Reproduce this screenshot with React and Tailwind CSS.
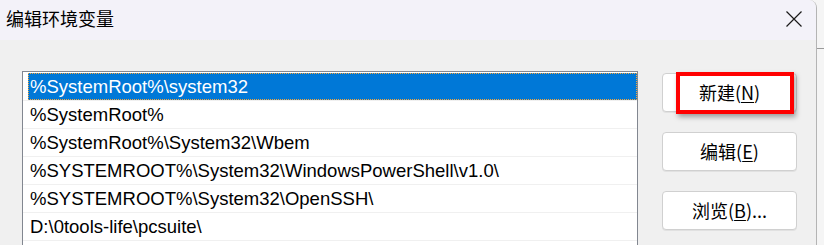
const paths = [
  '%SystemRoot%\\system32',
  '%SystemRoot%',
  '%SystemRoot%\\System32\\Wbem',
  '%SYSTEMROOT%\\System32\\WindowsPowerShell\\v1.0\\',
  '%SYSTEMROOT%\\System32\\OpenSSH\\',
  'D:\\0tools-life\\pcsuite\\',
  '',
]

function PathRow({ text, selected }) {
  return (
    <div className="h-[28px] border-b border-[#f0f0f0] pl-[5px] flex">
      <div
        className={`flex-1 flex items-center pl-[2px] ${
          selected ? 'bg-[#0078d7] text-white outline outline-1 outline-dotted outline-[#f7a53a] -outline-offset-1' : 'text-black'
        }`}
      >
        {text}
      </div>
    </div>
  )
}

function WinButton({ label, hotkey, suffix = '' }) {
  return (
    <button className="w-[135px] h-[39px] rounded-[4px] border border-[#d0d0d0] bg-white shadow-[0_1px_0_rgba(0,0,0,0.06)] text-[18px] text-black flex items-center justify-center">
      {label}(<span className="underline underline-offset-2">{hotkey}</span>){suffix}
    </button>
  )
}

export default function App() {
  return (
    <div
      className="w-[824px] h-[245px] overflow-hidden flex bg-[#f5f5f5]"
      style={{ fontFamily: '"Liberation Sans", "Noto Sans CJK SC", sans-serif' }}
    >
      <div className="w-[817px] h-full flex flex-col bg-[#f0f0f0] border-r border-[#b4b4b4] rounded-tr-[8px] overflow-hidden">
        <div className="h-[40px] bg-[#f3f2f9] flex items-center justify-between pl-[6px] pr-[14px] pb-[3px] shrink-0">
          <span className="text-[18px] text-black" style={{ fontFamily: '"Noto Sans CJK SC", sans-serif' }}>
            编辑环境变量
          </span>
          <svg width="16" height="16" viewBox="0 0 16 16" className="text-[#1a1a1a]">
            <path d="M0.5 0.5 L15.5 15.5 M15.5 0.5 L0.5 15.5" stroke="currentColor" strokeWidth="1.2" fill="none" />
          </svg>
        </div>

        <div className="flex pt-[31px] pl-[22px]">
          <div className="w-[616px] h-[200px] border border-[#828790] bg-white pt-[1px] text-[18.5px]">
            {paths.map((p, i) => (
              <PathRow key={i} text={p} selected={i === 0} />
            ))}
          </div>

          <div
            className="ml-[24px] pt-[2px] flex flex-col gap-[20px] relative"
            style={{ fontFamily: '"Noto Sans CJK SC", sans-serif' }}
          >
            <WinButton label="新建" hotkey="N" />
            <WinButton label="编辑" hotkey="E" />
            <WinButton label="浏览" hotkey="B" suffix="..." />
            <div className="absolute left-[14px] top-[1px] w-[118px] h-[42px] border-[4px] border-[#ff0000] shadow-[2px_3px_5px_rgba(0,0,0,0.35)]" />
          </div>
        </div>
      </div>
      <div className="flex-1 pt-[48px]">
        <div className="h-[1px] bg-[#9a9a9a]" />
      </div>
    </div>
  )
}
